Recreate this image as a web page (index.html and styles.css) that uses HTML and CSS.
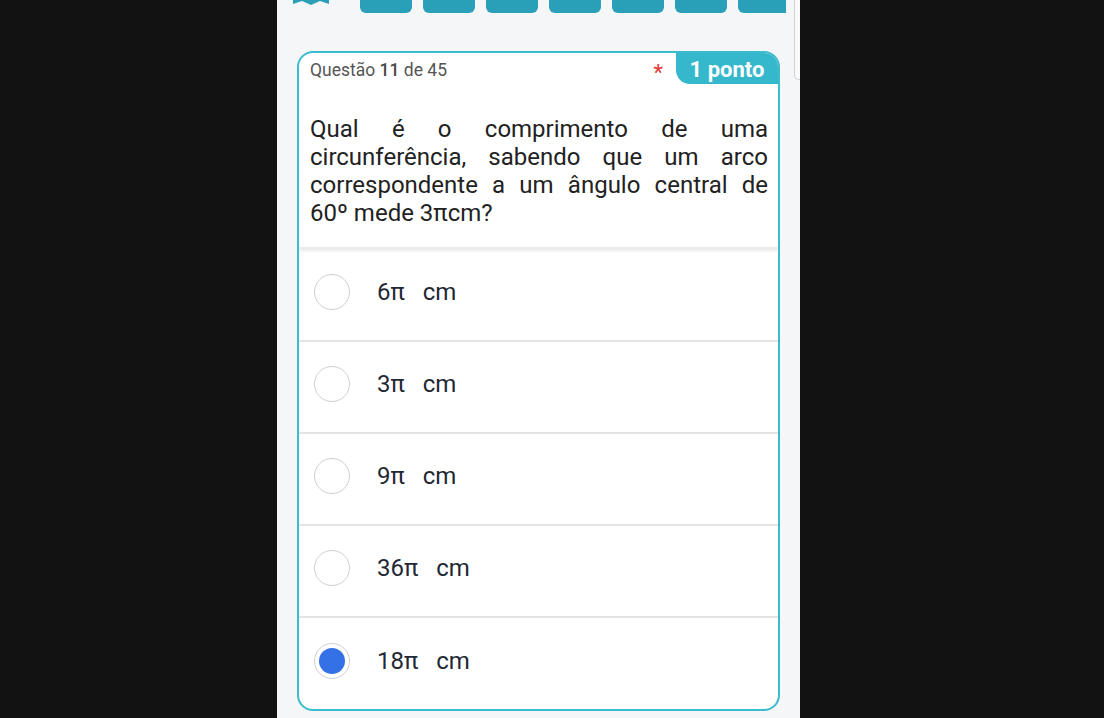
FILE: index.html
```html
<!DOCTYPE html>
<html lang="pt">
<head>
<meta charset="utf-8">
<link rel="stylesheet" href="styles.css">
</head>
<body>
<div class="phone">
  <div class="topbar">
    <svg class="map-icon" width="40" height="8" viewBox="0 0 40 8"><path d="M2 0 L2 5 L11 2 L20 6 L29 2 L38 5 L38 0 Z" fill="#2a9fb8"/></svg>
    <div class="tabs">
      <span class="tab"></span><span class="tab"></span><span class="tab"></span><span class="tab"></span><span class="tab"></span><span class="tab"></span><span class="tab last"></span>
    </div>
  </div>
  <div class="scrollbar"></div>
  <div class="card">
    <div class="card-head">
      <div class="qnum">Questão <b>11</b> de 45</div>
      <span class="req">*</span>
      <div class="badge">1 ponto</div>
    </div>
    <p class="question">Qual é o comprimento de uma circunferência, sabendo que um arco correspondente a um ângulo central de 60º mede 3πcm?</p>
    <div class="sep"></div>
    <div class="option"><span class="radio"></span><span class="label">6π   cm</span></div>
    <div class="option"><span class="radio"></span><span class="label">3π   cm</span></div>
    <div class="option"><span class="radio"></span><span class="label">9π   cm</span></div>
    <div class="option"><span class="radio"></span><span class="label">36π   cm</span></div>
    <div class="option last"><span class="radio checked"></span><span class="label">18π   cm</span></div>
  </div>
</div>
</body>
</html>
```
FILE: styles.css
```css
html, body {
  margin: 0;
  padding: 0;
  background: #121212;
  height: 718px;
  overflow: hidden;
}
body {
  padding-left: 277px;
  font-family: Roboto, "Noto Sans", Arial, sans-serif;
}
.phone {
  position: relative;
  width: 523px;
  height: 718px;
  background: #f5f6f7;
}
.topbar {
  display: flex;
  align-items: flex-start;
  height: 51px;
}
.map-icon {
  margin-left: 14px;
  margin-top: -1px;
}
.tabs {
  display: flex;
  gap: 11px;
  margin-left: 29px;
}
.tab {
  display: block;
  width: 52px;
  height: 13px;
  background: #2a9fb8;
  border-radius: 0 0 6px 6px;
}
.tab.last {
  width: 48px;
  border-radius: 0 0 0 6px;
}
.scrollbar {
  position: absolute;
  right: 0;
  top: -6px;
  width: 5px;
  height: 84px;
  border: 1px solid #cfd2d5;
  border-right: none;
  border-radius: 0 0 0 5px;
  background: #fafafa;
}
.card {
  margin-left: 20px;
  width: 483px;
  height: 660px;
  box-sizing: border-box;
  border: 2px solid #3bbccf;
  border-radius: 16px;
  background: #fff;
  overflow: hidden;
}
.card-head {
  display: flex;
  align-items: center;
  height: 31px;
}
.qnum {
  padding-left: 11px;
  font-size: 17.5px;
  color: #555;
  flex: 1;
  padding-top: 2px;
}
.qnum b {
  font-weight: 500;
  color: #4a4a4a;
}
.req {
  color: #e53935;
  font-size: 22px;
  margin-right: 13px;
  padding-top: 8px;
}
.badge {
  width: 102px;
  height: 31px;
  background: #35b7cc;
  color: #fff;
  font-weight: 700;
  font-size: 22px;
  display: flex;
  align-items: center;
  justify-content: center;
  border-radius: 0 0 0 14px;
  padding-top: 2px;
  box-sizing: border-box;
}
.question {
  margin: 0;
  padding: 31px 10px 20px 11px;
  font-size: 24px;
  line-height: 28px;
  color: #222;
  text-align: justify;
}
.sep {
  height: 3px;
  background: #ececec;
  box-shadow: 0 1px 3px rgba(0,0,0,0.10);
}
.option {
  display: flex;
  align-items: center;
  height: 92px;
  box-sizing: border-box;
  padding-bottom: 7px;
  border-bottom: 2px solid #e4e4e4;
  padding-left: 15px;
}
.option.last {
  border-bottom: none;
}
.radio {
  width: 36px;
  height: 36px;
  border: 1.5px solid #cfcfcf;
  border-radius: 50%;
  box-sizing: border-box;
  flex: none;
  display: flex;
  align-items: center;
  justify-content: center;
}
.radio.checked::after {
  content: "";
  width: 26px;
  height: 26px;
  border-radius: 50%;
  background: #3571e6;
}
.label {
  margin-left: 27px;
  white-space: pre;
  font-size: 24px;
  color: #1f2935;
}
```
